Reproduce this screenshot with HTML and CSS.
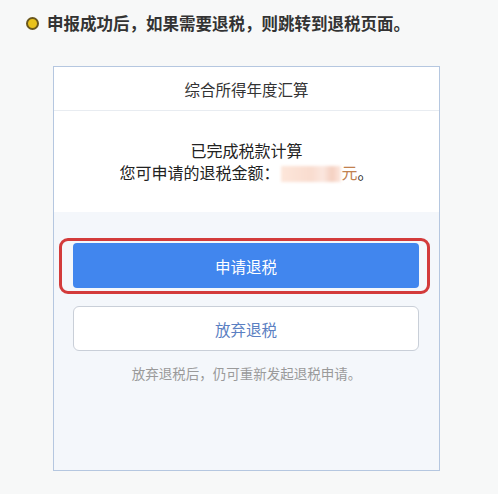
FILE: index.html
```html
<!DOCTYPE html>
<html lang="zh-CN">
<head>
<meta charset="utf-8">
<link rel="stylesheet" href="styles.css">
</head>
<body>
<div class="title">
  <span class="dot"></span>
  <span class="title-text">申报成功后，如果需要退税，则跳转到退税页面。</span>
</div>
<div class="card">
  <div class="card-head">综合所得年度汇算</div>
  <div class="card-body">
    <div class="line">已完成税款计算</div>
    <div class="line">您可申请的退税金额：<span class="blur"></span><span class="yuan">元</span>。</div>
  </div>
  <div class="card-actions">
    <div class="highlight">
      <div class="btn btn-primary">申请退税</div>
    </div>
    <div class="btn btn-plain">放弃退税</div>
    <div class="note">放弃退税后，仍可重新发起退税申请。</div>
  </div>
</div>
</body>
</html>
```
FILE: styles.css
```css
* { box-sizing: border-box; }
html, body {
  margin: 0;
  padding: 0;
  background: #f7f8f8;
  font-family: "Noto Sans CJK SC", "Noto Sans", sans-serif;
}
.title {
  display: flex;
  align-items: center;
  padding: 12px 0 0 26px;
  height: 34px;
}
.dot {
  width: 13px;
  height: 13px;
  border-radius: 50%;
  background: #e9c21b;
  border: 2px solid #6a571c;
  margin-right: 8px;
  flex: none;
}
.title-text {
  font-size: 16.5px;
  font-weight: bold;
  color: #333;
}
.card {
  margin: 32px 0 0 53px;
  width: 387px;
  height: 405px;
  border: 1px solid #b5c7e0;
  background: #f4f7fb;
  display: flex;
  flex-direction: column;
}
.card-head {
  height: 44px;
  background: #fff;
  border-bottom: 1px solid #e8ecf1;
  display: flex;
  align-items: center;
  justify-content: center;
  font-size: 15.5px;
  color: #333;
}
.card-body {
  background: #fff;
  padding: 28px 0 29px;
  text-align: center;
  font-size: 16px;
  line-height: 22px;
  color: #222;
}
.blur {
  display: inline-block;
  width: 60px;
  height: 16px;
  vertical-align: -3px;
  margin-left: 2px;
  background: linear-gradient(90deg, #fde6da, #f9dccf 50%, #fbe7df 70%, #f4cfc0 85%, #fde9e0);
  filter: blur(1.5px);
}
.yuan { color: #c2814e; }
.card-actions {
  padding: 26px 0 0;
  display: flex;
  flex-direction: column;
  align-items: flex-start;
}
.highlight {
  margin-left: 5px;
  border: 3px solid #d33b3b;
  border-radius: 9px;
  padding: 2px 8px 3px 11px;
}
.btn {
  width: 346px;
  height: 45px;
  display: flex;
  align-items: center;
  justify-content: center;
  font-size: 15.5px;
}
.btn-primary {
  background: #4186ee;
  color: #fff;
  border-radius: 4px;
}
.btn-plain {
  margin: 12px 0 0 19px;
  background: #fff;
  border: 1px solid #c9cfd8;
  border-radius: 6px;
  color: #5b80c2;
}
.note {
  align-self: stretch;
  text-align: center;
  margin-top: 13px;
  font-size: 13.5px;
  line-height: 18px;
  color: #9a9a9a;
}
```
